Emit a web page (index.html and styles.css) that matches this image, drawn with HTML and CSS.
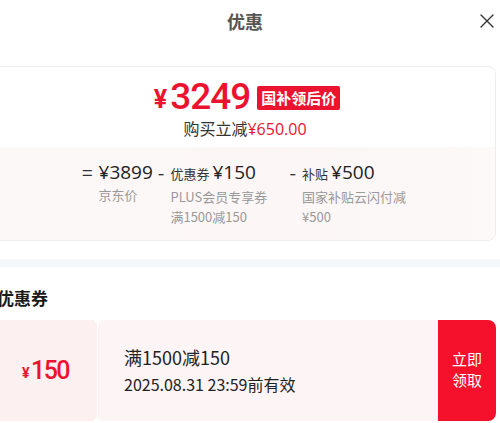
FILE: index.html
```html
<!DOCTYPE html>
<html lang="zh-CN">
<head>
    <meta charset="UTF-8">
    <meta name="viewport" content="width=device-width, initial-scale=1.0">
    <title>优惠</title>
    <link rel="stylesheet" href="styles.css">
</head>
<body>

<div class="sheet">
    <header class="sheet-header">
        <span></span>
        <h1>优惠</h1>
        <button class="close-btn" aria-label="关闭">
            <svg width="16" height="16" viewBox="0 0 16 16">
                <path d="M2 2 L14 14 M14 2 L2 14" stroke="#333" stroke-width="1.4" fill="none" stroke-linecap="round"/>
            </svg>
        </button>
    </header>

    <!-- Price summary -->
    <div class="price-card">
        <div class="price-top">
            <div class="final-price">
                <span class="yen">¥</span><span class="amount">3249</span>
                <span class="tag">国补领后价</span>
            </div>
            <p class="saving">购买立减<span class="red">¥650.00</span></p>
        </div>
        <div class="price-breakdown">
            <div class="part">
                <span class="sign">=</span>
                <div class="part-body">
                    <div class="part-head"><span class="money">¥3899</span></div>
                    <div class="part-desc">京东价</div>
                </div>
            </div>
            <div class="part">
                <span class="sign">-</span>
                <div class="part-body wide">
                    <div class="part-head"><span class="label">优惠券</span><span class="money">¥150</span></div>
                    <div class="part-desc">PLUS会员专享券 满1500减150</div>
                </div>
            </div>
            <div class="part">
                <span class="sign">-</span>
                <div class="part-body">
                    <div class="part-head"><span class="label">补贴</span><span class="money">¥500</span></div>
                    <div class="part-desc">国家补贴云闪付减 ¥500</div>
                </div>
            </div>
        </div>
    </div>

    <div class="divider"></div>

    <!-- Coupons -->
    <h2 class="section-title">优惠券</h2>
    <div class="coupon">
        <div class="coupon-value"><span class="yen-sm">¥</span>150</div>
        <div class="coupon-info">
            <div class="coupon-rule">满1500减150</div>
            <div class="coupon-date">2025.08.31 23:59前有效</div>
        </div>
        <button class="coupon-btn">立即<br>领取</button>
    </div>
</div>

</body>
</html>
```

FILE: styles.css
```css
body {
    font-family: "Noto Sans CJK SC", "Noto Sans", sans-serif;
    margin: 0;
    padding: 0;
    background-color: #fff;
    color: #222;
    overflow: hidden;
}

.sheet {
    width: 510px;
    margin-left: -10px;
}

.sheet-header {
    display: grid;
    grid-template-columns: 1fr auto 1fr;
    align-items: center;
    height: 42px;
}

.sheet-header h1 {
    margin: 0;
    font-size: 18px;
    font-weight: 700;
    color: #555;
    line-height: 42px;
}

.close-btn {
    justify-self: end;
    margin-right: 5px;
    padding: 0;
    border: none;
    background: none;
    display: flex;
}

.price-card {
    margin: 24px 4px 0 4px;
    border: 1px solid #f1ecec;
    border-radius: 8px;
    overflow: hidden;
}

.price-top {
    padding: 8px 0 7px;
    text-align: center;
}

.final-price {
    display: flex;
    justify-content: center;
    align-items: center;
    height: 43px;
    color: #ec1330;
    font-family: Roboto, sans-serif;
    margin-left: 4px;
}

.final-price .yen {
    font-size: 25px;
    font-weight: 700;
    margin-top: 6px;
    margin-right: 3px;
}

.final-price .amount {
    font-size: 37px;
    font-weight: 500;
    letter-spacing: -1px;
}

.tag {
    margin-left: 7px;
    background-color: #ec1330;
    color: #fff;
    font-family: "Noto Sans CJK SC", sans-serif;
    font-size: 15px;
    font-weight: 700;
    line-height: 24px;
    padding: 0 4px;
    border-radius: 2px;
    margin-top: 2px;
}

.saving {
    margin: 0;
    font-size: 16px;
    line-height: 21px;
    color: #333;
}

.saving .red {
    color: #ec1330;
    font-family: "Open Sans", "Noto Sans CJK SC", sans-serif;
}

.price-breakdown {
    display: flex;
    justify-content: center;
    gap: 5px;
    padding: 12px 0 13px;
    background: linear-gradient(90deg, #fdf8f8, #fcf6f6 60%, #fdf9f9);
    margin-right: -6px;
}

.part {
    display: flex;
    align-items: flex-start;
}

.sign {
    font-size: 19px;
    line-height: 26px;
    color: #333;
    margin-right: 6px;
}

.part-body.wide {
    width: 114px;
}

.part-head {
    display: flex;
    align-items: baseline;
    gap: 3px;
    line-height: 26px;
}

.part-head .label {
    font-size: 13px;
    color: #333;
}

.part-head .money {
    font-family: "Open Sans", "Noto Sans CJK SC", sans-serif;
    font-size: 19px;
    color: #222;
}

.part-desc {
    font-size: 13px;
    line-height: 20px;
    color: #999;
    max-width: 112px;
}

.divider {
    height: 8px;
    margin-top: 18px;
    background-color: #f6f7f9;
}

.section-title {
    margin: 19px 0 0 7px;
    font-size: 17px;
    font-weight: 700;
    line-height: 24px;
    color: #1a1a1a;
}

.coupon {
    display: flex;
    height: 101px;
    margin: 10px 4px 0 4px;
}

.coupon-value {
    position: relative;
    width: 103px;
    display: flex;
    align-items: center;
    justify-content: center;
    background-color: #fcf0f1;
    border-radius: 8px 0 0 8px;
    color: #ec1330;
    font-family: Roboto, sans-serif;
    font-size: 25px;
    font-weight: 500;
    letter-spacing: -1.5px;
}

.coupon-value .yen-sm {
    font-size: 14px;
    font-weight: 700;
    margin-top: 4px;
    margin-right: 3px;
}

.coupon-value::before,
.coupon-value::after {
    content: "";
    position: absolute;
    right: -4px;
    width: 7px;
    height: 7px;
    border-radius: 50%;
    background-color: #fff;
    z-index: 1;
}

.coupon-value::before {
    top: -4px;
}

.coupon-value::after {
    bottom: -4px;
}

.coupon-info {
    flex: 1;
    display: flex;
    flex-direction: column;
    justify-content: center;
    margin-left: 1px;
    padding-left: 26px;
    background-color: #fcf4f5;
}

.coupon-rule {
    font-size: 18px;
    line-height: 27px;
    color: #222;
}

.coupon-date {
    font-size: 16px;
    line-height: 26px;
    color: #222;
}

.coupon-btn {
    width: 58px;
    border: none;
    border-radius: 0 8px 8px 0;
    background-color: #f5102b;
    color: #fff;
    font-family: "Noto Sans CJK SC", sans-serif;
    font-size: 15px;
    line-height: 21px;
    padding: 0 0 4px;
}
```
